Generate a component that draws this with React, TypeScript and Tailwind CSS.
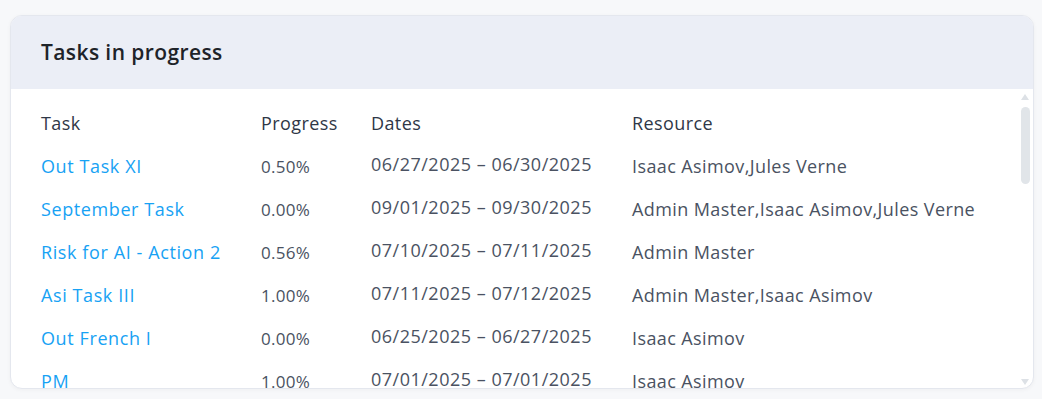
import React from 'react';

interface TaskRow {
  name: string;
  progress: string;
  dates: string;
  resource: string;
}

const TASKS: TaskRow[] = [
  { name: 'Out Task XI', progress: '0.50%', dates: '06/27/2025 – 06/30/2025', resource: 'Isaac Asimov,Jules Verne' },
  { name: 'September Task', progress: '0.00%', dates: '09/01/2025 – 09/30/2025', resource: 'Admin Master,Isaac Asimov,Jules Verne' },
  { name: 'Risk for AI - Action 2', progress: '0.56%', dates: '07/10/2025 – 07/11/2025', resource: 'Admin Master' },
  { name: 'Asi Task III', progress: '1.00%', dates: '07/11/2025 – 07/12/2025', resource: 'Admin Master,Isaac Asimov' },
  { name: 'Out French I', progress: '0.00%', dates: '06/25/2025 – 06/27/2025', resource: 'Isaac Asimov' },
  { name: 'PM', progress: '1.00%', dates: '07/01/2025 – 07/01/2025', resource: 'Isaac Asimov' },
];

export default function App() {
  return (
    <div className="w-[1042px] h-[399px] bg-[#f7f8fa] pt-[15px] pl-[10px] font-['Open_Sans',sans-serif]">
      <div className="w-[1024px] h-[374px] rounded-xl border border-[#e4e7ee] bg-white overflow-hidden shadow-[0_1px_4px_rgba(0,0,0,0.04)]">
        {/* Card header */}
        <div className="h-[73px] bg-[#ebeef6] flex items-center px-[30px]">
          <h2 className="text-[21px] font-semibold text-[#1e2329] tracking-[0.4px]">Tasks in progress</h2>
        </div>

        {/* Scrollable body */}
        <div className="relative h-[300px] overflow-hidden">
          <table className="ml-[30px] mt-[13px] border-collapse text-left">
            <thead>
              <tr className="h-[43px] text-[18px] text-[#2f3747] tracking-[0.4px]">
                <th className="w-[220px] font-medium">Task</th>
                <th className="w-[110px] font-medium">Progress</th>
                <th className="w-[261px] font-medium">Dates</th>
                <th className="font-medium">Resource</th>
              </tr>
            </thead>
            <tbody>
              {TASKS.map((t) => (
                <tr key={t.name} className="h-[43px]">
                  <td className="text-[18px] tracking-[0.6px] text-[#17a2f4]">
                    <a href="#">{t.name}</a>
                  </td>
                  <td className="text-[17px] tracking-[0.3px] text-[#4a5262]">{t.progress}</td>
                  <td className="text-[18px] tracking-[0.5px] text-[#4a5262] pb-[4px]">{t.dates}</td>
                  <td className="text-[18px] tracking-[0.4px] text-[#4a5262]">{t.resource}</td>
                </tr>
              ))}
            </tbody>
          </table>

          {/* Scrollbar */}
          <div className="absolute right-[2px] top-0 bottom-0 w-[12px] flex flex-col items-center">
            <div className="mt-[5px] w-0 h-0 border-l-[4px] border-r-[4px] border-b-[6px] border-l-transparent border-r-transparent border-b-[#dde1e6]" />
            <div className="mt-[7px] w-[9px] h-[77px] rounded-full bg-[#e1e5e9]" />
            <div className="mt-auto mb-[4px] w-0 h-0 border-l-[4px] border-r-[4px] border-t-[6px] border-l-transparent border-r-transparent border-t-[#dde1e6]" />
          </div>
        </div>
      </div>
    </div>
  );
}
